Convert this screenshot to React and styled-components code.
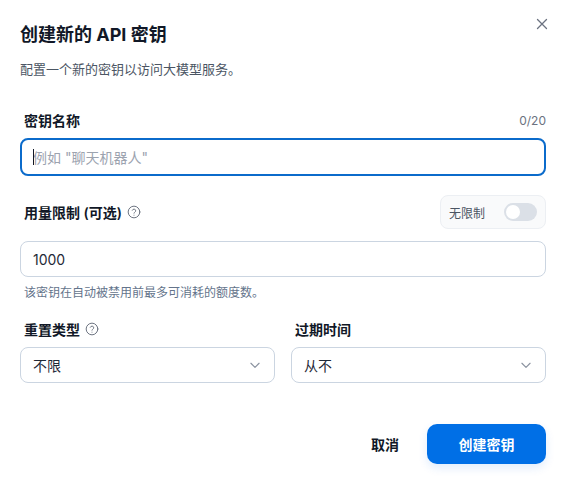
import React from "react";
import styled, { createGlobalStyle } from "styled-components";

const Global = createGlobalStyle`
  html, body { margin: 0; padding: 0; background: #fff; }
  body { font-family: Inter, "Noto Sans CJK SC", sans-serif; }
  * { box-sizing: border-box; }
`;
const Dialog = styled.div`
  position: relative;
  width: 569px;
  height: 485px;
  padding: 24px 23px 0 20px;
  background: #fff;
  display: flex;
  flex-direction: column;
`;
const Close = styled.button`
  position: absolute;
  top: 17px;
  right: 20px;
  width: 14px;
  height: 14px;
  padding: 0;
  border: 0;
  background: none;
  color: #6b7280;
  display: flex;
`;
const Title = styled.h2`
  margin: 0;
  font-size: 18px;
  line-height: 22px;
  font-weight: 700;
  color: #111827;
`;
const Sub = styled.p`
  margin: 14px 0 0;
  font-size: 13px;
  line-height: 18px;
  color: #4b5563;
`;
const LabelRow = styled.div`
  display: flex;
  align-items: center;
  justify-content: space-between;
  padding-left: 4px;
  height: ${p => p.$h || 18}px;
  margin-top: ${p => p.$mt || 0}px;
`;
const Label = styled.span`
  display: inline-flex;
  align-items: center;
  gap: 5px;
  font-size: 14px;
  font-weight: 600;
  color: #111827;
`;
const Counter = styled.span`
  font-size: 12px;
  color: #6b7280;
`;
const NameInput = styled.div`
  position: relative;
  height: 38px;
  margin-top: 9px;
  border: 2px solid #0b6bcb;
  border-radius: 8px;
  padding-left: 11px;
  display: flex;
  align-items: center;
  font-size: 14px;
  color: #9ca3af;
  &::before {
    content: "";
    position: absolute;
    left: 11px;
    top: 9px;
    width: 1px;
    height: 16px;
    background: #111827;
  }
`;
const Toggle = styled.div`
  width: 106px;
  height: 34px;
  border: 1px solid #eceff3;
  border-radius: 8px;
  background: #f9fafb;
  display: flex;
  align-items: center;
  justify-content: space-between;
  padding: 0 8px;
  font-size: 12px;
  color: #4b5563;
`;
const Track = styled.div`
  width: 33px;
  height: 18px;
  padding: 2px;
  border-radius: 9px;
  background: #dbe0e7;
`;
const Knob = styled.div`
  width: 14px;
  height: 14px;
  border-radius: 50%;
  background: #fff;
`;
const Field = styled.div`
  height: 36px;
  border: 1px solid #cbd5e1;
  border-radius: 8px;
  padding: 0 12px;
  display: flex;
  align-items: center;
  justify-content: space-between;
  font-size: 14px;
  color: #1f2937;
  margin-top: ${p => p.$mt || 0}px;
`;
const Help = styled.p`
  margin: 8px 0 0;
  padding-left: 4px;
  font-size: 12px;
  line-height: 16px;
  color: #64748b;
`;
const Columns = styled.div`
  display: grid;
  grid-template-columns: 255px 255px;
  gap: 16px;
  margin-top: 19px;
`;
const Footer = styled.div`
  display: flex;
  justify-content: flex-end;
  align-items: center;
  margin-top: 41px;
`;
const Cancel = styled.button`
  border: 0;
  background: none;
  padding: 0;
  width: 28px;
  margin-right: 28px;
  font: 600 14px Inter, "Noto Sans CJK SC", sans-serif;
  color: #111827;
  white-space: nowrap;
`;
const Primary = styled.button`
  width: 119px;
  height: 40px;
  border: 0;
  border-radius: 10px;
  background: #006fe6;
  color: #fff;
  font: 600 14px Inter, "Noto Sans CJK SC", sans-serif;
  box-shadow: 0 4px 10px rgba(0, 111, 230, 0.12);
`;

const Q = () => (
  <svg width="14" height="14" viewBox="0 0 24 24" fill="none" stroke="#6b7280" strokeWidth="1.7" strokeLinecap="round" strokeLinejoin="round">
    <circle cx="12" cy="12" r="10" />
    <path d="M9.1 9a3 3 0 0 1 5.8 1c0 2-3 2.600-3 4" />
    <path d="M12 17.500h.01" />
  </svg>
);
const Chev = () => (
  <svg width="14" height="14" viewBox="0 0 24 24" fill="none" stroke="#8b93a0" strokeWidth="2" strokeLinecap="round" strokeLinejoin="round">
    <path d="m5 9 7 7 7-7" />
  </svg>
);

export default function App() {
  return (
    <>
      <Global />
      <Dialog>
        <Close aria-label="close">
          <svg width="14" height="14" viewBox="0 0 14 14" fill="none" stroke="#6b7280" strokeWidth="1.3" strokeLinecap="round">
            <path d="M2.5 2.5l9 9M11.500 2.500l-9 9" />
          </svg>
        </Close>
        <Title>创建新的 API 密钥</Title>
        <Sub>配置一个新的密钥以访问大模型服务。</Sub>
        <LabelRow $mt={33}>
          <Label>密钥名称</Label>
          <Counter>0/20</Counter>
        </LabelRow>
        <NameInput>例如 "聊天机器人"</NameInput>
        <LabelRow $h={34} $mt={19}>
          <Label>用量限制 (可选) <Q /></Label>
          <Toggle>无限制<Track><Knob /></Track></Toggle>
        </LabelRow>
        <Field $mt={12}>1000</Field>
        <Help>该密钥在自动被禁用前最多可消耗的额度数。</Help>
        <Columns>
          <div>
            <LabelRow><Label>重置类型 <Q /></Label></LabelRow>
            <Field $mt={9}>不限<Chev /></Field>
          </div>
          <div>
            <LabelRow><Label>过期时间</Label></LabelRow>
            <Field $mt={9}>从不<Chev /></Field>
          </div>
        </Columns>
        <Footer>
          <Cancel>取消</Cancel>
          <Primary>创建密钥</Primary>
        </Footer>
      </Dialog>
    </>
  );
}
